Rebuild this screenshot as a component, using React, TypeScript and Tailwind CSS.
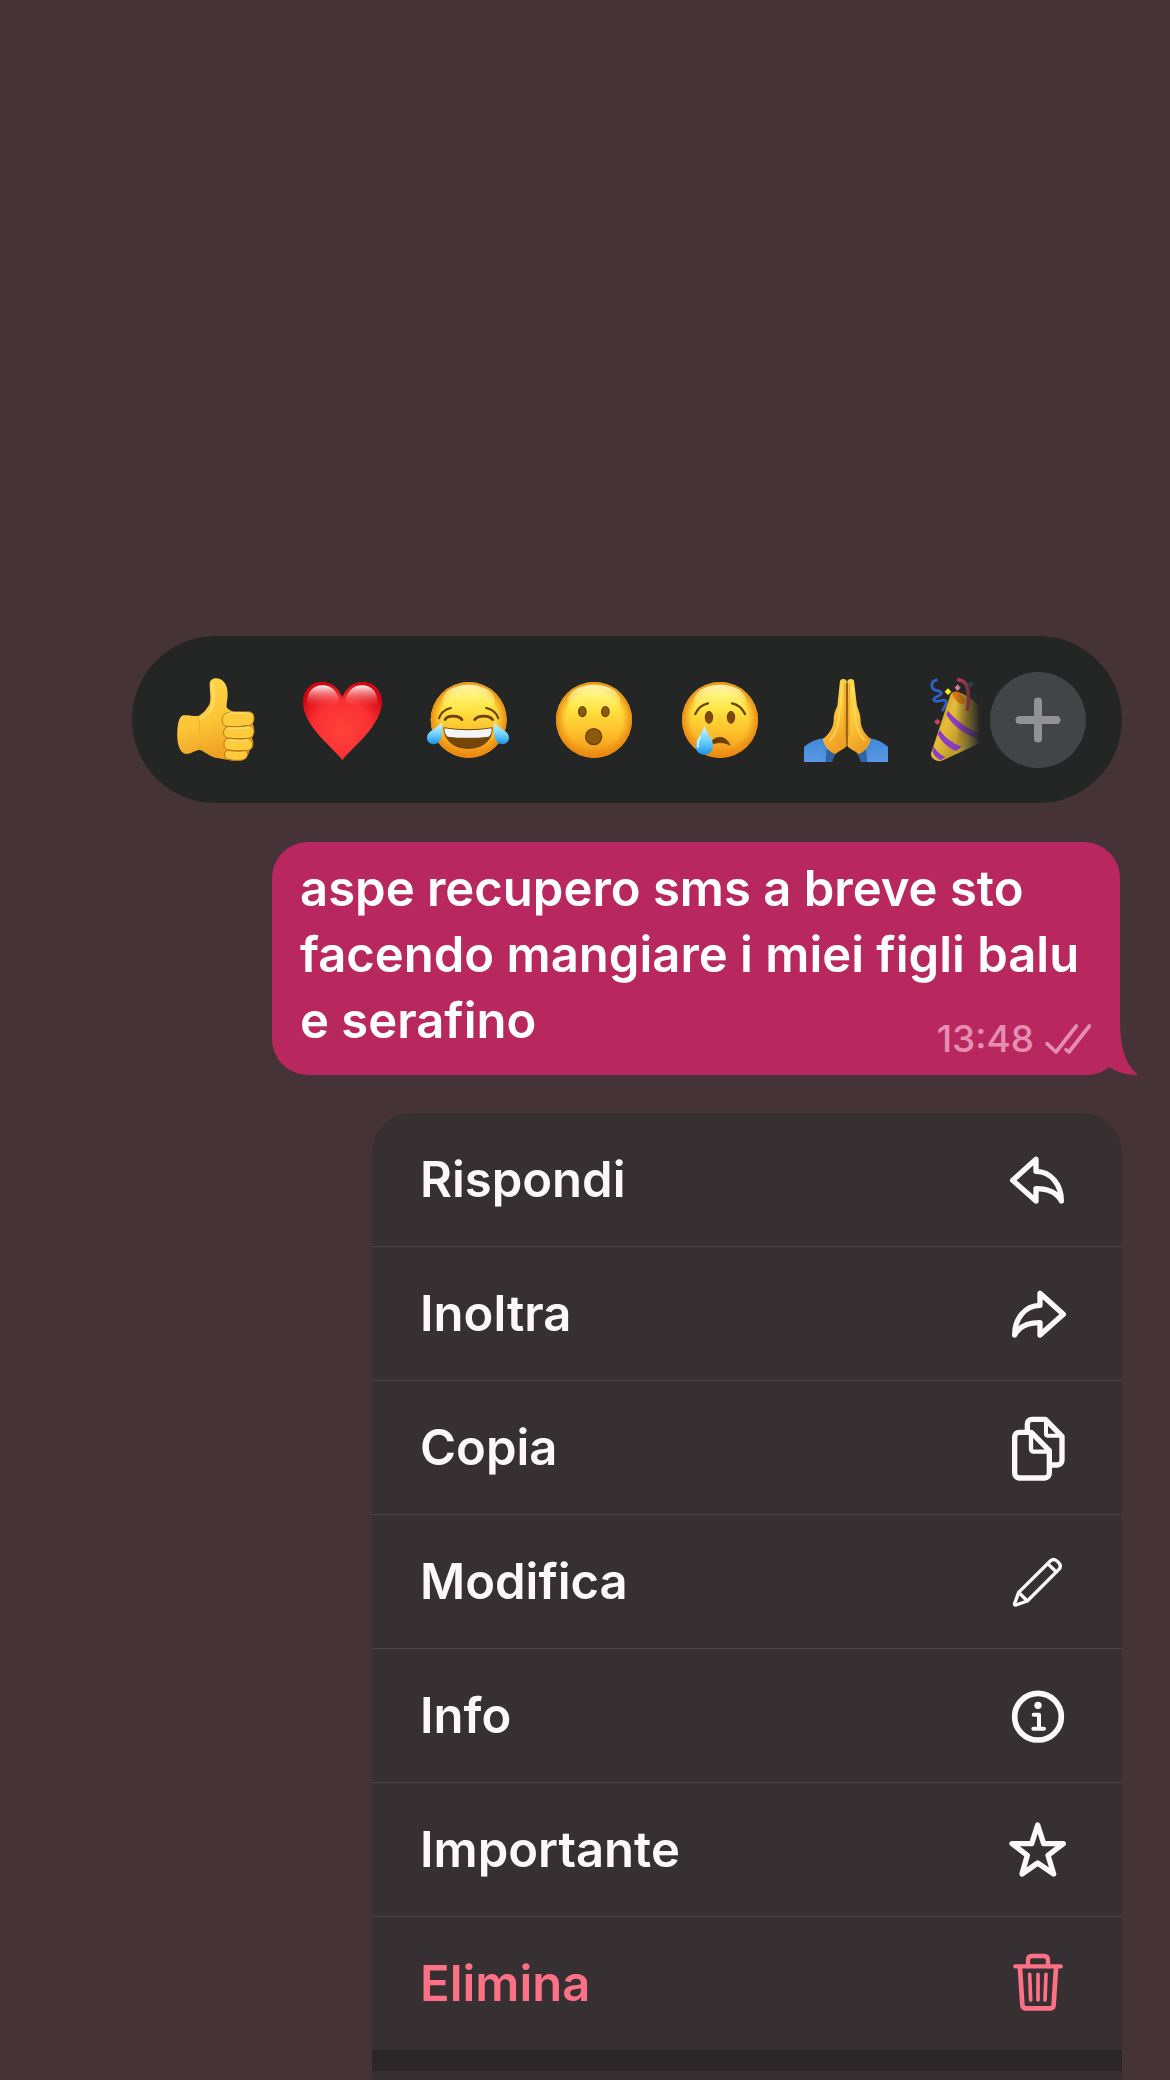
import type { ReactNode } from 'react'

const DARK = '#6b3f06'

function Gradients() {
  return (
    <svg className="absolute h-0 w-0" aria-hidden="true">
      <defs>
        <linearGradient id="face" x1="0" y1="0" x2="0" y2="1">
          <stop offset="0" stopColor="#fff04c" />
          <stop offset="0.35" stopColor="#fee23e" />
          <stop offset="0.72" stopColor="#fbb928" />
          <stop offset="1" stopColor="#f08c14" />
        </linearGradient>
        <radialGradient id="rim" cx="0.5" cy="0.5" r="0.5">
          <stop offset="0.74" stopColor="#ec8b12" stopOpacity="0" />
          <stop offset="1" stopColor="#e8860f" stopOpacity="0.95" />
        </radialGradient>
        <linearGradient id="shine" x1="0" y1="0" x2="0" y2="1">
          <stop offset="0" stopColor="#fffbc0" stopOpacity="0.9" />
          <stop offset="1" stopColor="#fff04c" stopOpacity="0" />
        </linearGradient>
        <linearGradient id="tear" x1="0" y1="0" x2="0" y2="1">
          <stop offset="0" stopColor="#d4f6ff" />
          <stop offset="0.55" stopColor="#6fd0fb" />
          <stop offset="1" stopColor="#1b94e4" />
        </linearGradient>
        <radialGradient id="heart" cx="0.5" cy="0.62" r="0.62">
          <stop offset="0" stopColor="#ff4238" />
          <stop offset="0.6" stopColor="#fa3034" />
          <stop offset="1" stopColor="#cf0712" />
        </radialGradient>
        <linearGradient id="heartShine" x1="0" y1="0" x2="0" y2="1">
          <stop offset="0" stopColor="#fff" stopOpacity="0.95" />
          <stop offset="1" stopColor="#ff5550" stopOpacity="0" />
        </linearGradient>
        <linearGradient id="skin" x1="0" y1="0" x2="0.3" y2="1">
          <stop offset="0" stopColor="#ffd94d" />
          <stop offset="0.6" stopColor="#fdc436" />
          <stop offset="1" stopColor="#eea024" />
        </linearGradient>
        <linearGradient id="sleeve" x1="0" y1="0" x2="0" y2="1">
          <stop offset="0" stopColor="#3f8ad9" />
          <stop offset="1" stopColor="#5a98e6" />
        </linearGradient>
        <linearGradient id="cuff" x1="0" y1="0" x2="1" y2="0">
          <stop offset="0" stopColor="#1c4a8c" stopOpacity="0" />
          <stop offset="0.5" stopColor="#173f7c" />
          <stop offset="1" stopColor="#1c4a8c" stopOpacity="0" />
        </linearGradient>
        <linearGradient id="cone" x1="0" y1="0.2" x2="1" y2="0.7">
          <stop offset="0" stopColor="#b68b1d" />
          <stop offset="0.3" stopColor="#e5bd3a" />
          <stop offset="0.55" stopColor="#c09a28" />
          <stop offset="1" stopColor="#f6e668" />
        </linearGradient>
      </defs>
    </svg>
  )
}

function Emoji({ viewBox, children }: { viewBox: string; children: ReactNode }) {
  return (
    <svg viewBox={viewBox} className="size-[84px] overflow-visible" aria-hidden="true">
      {children}
    </svg>
  )
}

function Face({ cx }: { cx: number }) {
  return (
    <>
      <circle cx={cx} cy="300" r="114" fill="url(#face)" />
      <circle cx={cx} cy="300" r="114" fill="url(#rim)" />
      <ellipse cx={cx} cy="242" rx="78" ry="48" fill="url(#shine)" />
    </>
  )
}

const ThumbsUp = () => (
  <Emoji viewBox="165 174 252 252">
    <path
      d="M272 190C274 172 300 170 313 184C326 197 327 216 325 236C324 248 321 258 324 264C332 271 340 275 350 276L392 275C407 277 409 300 400 312C408 322 407 345 398 354C406 364 405 384 391 392C388 407 382 418 366 421C345 425 310 416 288 413C268 408 254 391 240 390C226 392 216 402 200 402C182 400 173 370 175 335C176 304 183 287 194 286C210 285 224 289 237 288C252 283 262 268 270 256C278 240 272 212 272 190Z"
      fill="url(#skin)"
    />
    <path d="M238 288C244 300 240 316 242 340M240 390C246 382 243 374 242 366" fill="none" stroke="#e0a02a" strokeWidth="3" opacity="0.6" />
    <g fill="#fdcb3c" stroke="#b87512" strokeWidth="3">
      <path d="M324 278Q345 275 392 276C410 278 410 314 388 317Q350 322 322 319C304 314 305 285 324 278Z" />
      <path d="M326 320Q365 322 392 317C410 320 410 352 388 355Q355 358 325 354C309 349 310 325 326 320Z" />
      <path d="M326 355Q360 360 388 356C406 360 405 388 386 391Q352 395 326 390C311 385 311 360 326 355Z" />
      <path d="M326 391Q354 396 380 392C391 398 386 418 366 421Q345 423 325 417C313 412 314 396 326 391Z" />
    </g>
    <path d="M325 281C336 278 370 278 390 280M328 324C350 326 374 325 390 322M328 359C350 363 374 362 387 360" fill="none" stroke="#ffe478" strokeWidth="5" strokeLinecap="round" opacity="0.8" />
    <path d="M281 190C282 210 287 235 281 257C274 278 257 290 244 296" fill="none" stroke="#ffe777" strokeWidth="8" strokeLinecap="round" opacity="0.55" />
  </Emoji>
)

const Heart = () => (
  <Emoji viewBox="540 174 252 252">
    <path
      d="M667 421C650 397 605 360 578 322C558 294 549 268 549 246C549 210 573 185 606 185C636 185 657 205 667 232C677 205 698 185 728 185C761 185 786 210 786 246C786 268 776 294 756 322C729 360 684 397 667 421Z"
      fill="url(#heart)"
    />
    <path d="M561 250C560 216 580 196 607 196C636 196 652 214 658 242C640 262 580 266 561 250ZM676 242C682 214 698 196 727 196C754 196 774 216 773 250C754 266 694 262 676 242Z" fill="url(#heartShine)" />
  </Emoji>
)

const Joy = () => (
  <Emoji viewBox="918 174 252 252">
    <Face cx={1046} />
    <g fill="none" stroke={DARK} strokeLinecap="round">
      <path d="M957 295Q966 269 993 264M1135 295Q1126 269 1098 264" strokeWidth="6" />
      <path d="M975 299C982 285 1016 285 1026 299M1064 299C1074 285 1108 285 1118 299" strokeWidth="8" />
    </g>
    <path d="M970 322Q1045 334 1118 322C1119 360 1090 387 1045 387C1000 387 971 360 970 322Z" fill="#744608" />
    <path d="M973 325Q1045 337 1115 325C1116 338 1111 347 1106 350Q1045 357 983 350C977 345 973 337 973 325Z" fill="#f4f6f6" />
    <path d="M965 308C969 330 968 357 954 368C940 378 921 370 921 353C921 332 951 325 965 308ZM1123 308C1119 330 1121 357 1134 368C1148 378 1167 370 1167 353C1167 332 1137 325 1123 308Z" fill="url(#tear)" />
  </Emoji>
)

const Surprised = () => (
  <Emoji viewBox="156 174 252 252">
    <Face cx={282} />
    <g fill="#8d5a0b" stroke={DARK} strokeWidth="4">
      <ellipse cx="247" cy="275" rx="11" ry="15" />
      <ellipse cx="316" cy="275" rx="11" ry="15" />
      <ellipse cx="281" cy="350" rx="24" ry="24" />
    </g>
  </Emoji>
)

const Crying = () => (
  <Emoji viewBox="534 174 252 252">
    <Face cx={660} />
    <path d="M586 282Q598 255 624 250M696 250Q722 255 735 282" fill="none" stroke={DARK} strokeWidth="7" strokeLinecap="round" />
    <g fill="#7b4a08" stroke={DARK} strokeWidth="3">
      <ellipse cx="627" cy="292" rx="11" ry="18" />
      <ellipse cx="693" cy="292" rx="11" ry="18" />
    </g>
    <path d="M634 366C646 346 679 346 690 376C674 366 657 366 638 372Z" fill={DARK} stroke={DARK} strokeWidth="2" strokeLinejoin="round" />
    <path d="M613 314C617 339 640 352 639 378C638 395 627 404 613 404C598 404 587 394 587 378C588 352 609 340 613 314Z" fill="url(#tear)" />
    <path d="M600 352C594 362 592 371 594 381" fill="none" stroke="#e3faff" strokeWidth="5" strokeLinecap="round" />
  </Emoji>
)

const Pray = () => (
  <Emoji viewBox="72 174 252 252">
    <path d="M72 380Q100 358 131 355L168 400Q158 412 156 426H72ZM324 380Q296 358 270 355L230 400Q240 412 243 426H324Z" fill="url(#sleeve)" />
    <path d="M120 357L131 355L168 400Q158 412 156 426H118ZM278 357L270 355L230 400Q240 412 243 426H280Z" fill="url(#cuff)" opacity="0.25" />
    <path d="M140 388L168 400Q158 412 156 426H136ZM258 388L230 400Q240 412 243 426H262Z" fill="#173f7c" opacity="0.55" />
    <path d="M180 182C184 175 198 175 200 184L201 372C201 385 184 388 166 402C150 398 134 382 128 357C145 345 160 325 161 303C160 285 166 270 172 258Z" fill="url(#skin)" />
    <path d="M222 182C218 175 204 175 202 184L201 372C201 385 218 388 236 402C252 398 266 382 273 357C257 345 242 325 242 303C242 285 236 270 231 258Z" fill="url(#skin)" />
    <path d="M201 190V374" stroke="#7b4205" strokeWidth="4" />
    <path d="M187 190L181 260C173 290 184 324 149 362M215 190L222 260C230 290 220 324 254 362" fill="none" stroke="#ffe26a" strokeWidth="6" opacity="0.6" />
    <path d="M194 190L196 350M208 190L206 350" fill="none" stroke="#d98c1e" strokeWidth="4" opacity="0.6" />
  </Emoji>
)

const Party = () => (
  <Emoji viewBox="450 174 252 252">
    <path d="M473 179C450 183 450 209 472 212C490 216 487 222 470 230C452 242 464 247 486 241C506 238 500 252 486 273" fill="none" stroke="#315fd0" strokeWidth="8" />
    <path d="M512 222C520 209 552 214 600 258L640 350Q560 388 482 424C464 424 452 414 453 400Z" fill="url(#cone)" />
    <path d="M517 220C523 208 550 214 556 246C548 262 524 246 517 220Z" fill="#d3770d" />
    <path d="M503 272Q545 320 598 340L596 358Q530 335 499 284Z" fill="#8b3cc4" />
    <path d="M479 330Q505 367 545 380L527 393Q490 377 473 343Z" fill="#8b3cc4" />
    <path d="M461 379Q472 401 496 411L482 421Q462 410 457 393Z" fill="#8b3cc4" />
    <path d="M532 180C560 178 572 204 562 272" fill="none" stroke="#d33a5c" strokeWidth="11" />
    <path d="M504 205L514 215L504 225L494 215Z" fill="#f8ee28" />
    <path d="M533 193L542 203L533 213L524 203Z" fill="#ee7c9c" />
    <path d="M472 296L482 305L472 315L462 305Z" fill="#cf3e62" />
    <path d="M573 184L583 193L573 203L563 193Z" fill="#276d96" />
    <circle cx="587" cy="231" r="6" fill="#25466d" />
  </Emoji>
)

const REACTIONS = [
  { label: 'Mi piace', icon: <ThumbsUp /> },
  { label: 'Cuore', icon: <Heart /> },
  { label: 'Risata', icon: <Joy /> },
  { label: 'Stupore', icon: <Surprised /> },
  { label: 'Tristezza', icon: <Crying /> },
  { label: 'Grazie', icon: <Pray /> },
  { label: 'Festa', icon: <Party /> },
]

const MENU = [
  {
    label: 'Rispondi',
    icon: <path d="M14 91L84 28V64C131 64 160 107 160 153C146 126 118 116 84 116V153Z" strokeWidth="16" />,
  },
  {
    label: 'Inoltra',
    icon: <path d="M166 91L96 28V64C49 64 20 107 20 153C34 126 62 116 96 116V153Z" strokeWidth="16" />,
  },
  {
    label: 'Copia',
    icon: (
      <>
        <path d="M58 40V18a14 14 0 0 1 14-14H112L162 55V127a14 14 0 0 1-14 14H128" strokeWidth="16" />
        <path d="M114 6V47a6 6 0 0 0 6 6H160" strokeWidth="12" />
        <path d="M34 43H70L124 98V166a14 14 0 0 1-14 14H34a14 14 0 0 1-14-14V57a14 14 0 0 1 14-14Z" strokeWidth="16" />
        <path d="M69 45V93a8 8 0 0 0 8 8H122" strokeWidth="13" />
      </>
    ),
  },
  {
    label: 'Modifica',
    icon: (
      <path
        d="M20 154L32 121L127 27Q137 17 148 28L152 32Q162 43 152 53L58 147L24 159Q18 160 20 154ZM32 121L58 147M119 35L145 60"
        strokeWidth="10"
      />
    ),
  },
  {
    label: 'Info',
    icon: (
      <>
        <circle cx="90" cy="92" r="70" strokeWidth="17" />
        <circle cx="90" cy="58" r="11" fill="currentColor" stroke="none" />
        <path d="M77 86H93V128M76 128H108" strokeWidth="12" />
      </>
    ),
  },
  {
    label: 'Importante',
    icon: <path d="M89 15L107 71H166L120 106L137 162L89 129L42 162L58 106L12 71H71Z" strokeWidth="16" />,
  },
  {
    label: 'Elimina',
    danger: true,
    icon: (
      <>
        <path d="M22 37H158" strokeWidth="13" />
        <path d="M60 37V18Q60 6 72 6H108Q120 6 120 18V37" strokeWidth="13" />
        <path d="M36 42L43 152Q44 163 55 163H125Q136 163 137 152L144 42" strokeWidth="14" />
        <path d="M65 61L68 138M90 61V138M114 61L111 138" strokeWidth="11" />
      </>
    ),
  },
]

function ReactionBar() {
  return (
    <div className="flex h-[167px] w-full max-w-[990px] items-center rounded-full bg-[#242625] pr-9 pl-[42px]">
      <div className="flex min-w-0 flex-1 gap-[42px] overflow-hidden [mask-image:linear-gradient(to_right,black_calc(100%-24px),transparent)]">
        {REACTIONS.map((r) => (
          <button key={r.label} type="button" aria-label={r.label} className="shrink-0">
            {r.icon}
          </button>
        ))}
      </div>
      <button
        type="button"
        aria-label="Altre reazioni"
        className="ml-[10px] flex size-24 shrink-0 items-center justify-center rounded-full bg-[#424545] text-[#929292]"
      >
        <svg viewBox="0 0 48 48" className="size-12" fill="none" stroke="currentColor" strokeWidth="8" strokeLinecap="round" aria-hidden="true">
          <path d="M24 5.500V42.500M5.500 24H42.500" />
        </svg>
      </button>
    </div>
  )
}

function Message() {
  return (
    <div className="relative mr-[2px] w-full max-w-[848px] rounded-[36px] bg-[#b8285e] pt-[14px] pr-6 pb-[21px] pl-7 text-white">
      {/* tail */}
      <svg viewBox="0 0 162 180" className="absolute -right-[18px] bottom-0 h-[60px] w-[54px] text-[#b8285e]" aria-hidden="true">
        <path d="M0 180C30 180 54 174 75 155C95 170 125 180 162 180C128 148 111 112 108 30V0H0Z" fill="currentColor" />
      </svg>
      <p className="text-[49px] leading-[66px] font-semibold whitespace-nowrap">
        aspe recupero sms a breve sto
        <br />
        facendo mangiare i miei figli balu
        <br />e serafino
      </p>
      <div className="absolute right-[26px] bottom-[14px] flex items-center gap-[10px] text-[#e78db2]">
        <time className="text-[37px] leading-[44px] font-medium">13:48</time>
        <svg viewBox="882 576 150 96" className="h-8 w-[50px]" fill="none" stroke="currentColor" strokeWidth="11" strokeLinecap="round" strokeLinejoin="round" aria-label="Consegnato">
          <path d="M891 638L918 663L979 585M948 656L957 663L1018 585" />
        </svg>
      </div>
    </div>
  )
}

function ContextMenu() {
  return (
    <div className="flex w-full max-w-[750px] flex-1 flex-col overflow-hidden rounded-t-[40px] bg-[#373032]">
      <ul className="divide-y divide-[#4a4446]">
        {MENU.map((item) => (
          <li key={item.label}>
            <button
              type="button"
              className={`flex h-[133px] w-full items-center justify-between pr-[52px] pl-12 text-left text-[49px] leading-[66px] font-semibold ${
                item.danger ? 'text-[#fc7186]' : 'text-[#fcf8fa]'
              }`}
            >
              {item.label}
              <svg
                viewBox="-6 -6 192 192"
                className="size-16 overflow-visible"
                fill="none"
                stroke="currentColor"
                strokeLinecap="round"
                strokeLinejoin="round"
                aria-hidden="true"
              >
                {item.icon}
              </svg>
            </button>
          </li>
        ))}
      </ul>
      <div className="h-[21px] shrink-0 bg-[#2b2728]" />
      <div className="min-h-2 flex-1" />
    </div>
  )
}

export default function App() {
  return (
    <main className="flex min-h-screen flex-col items-end bg-[#463338] pt-[636px] pr-12 pl-12 font-['Inter','Liberation_Sans',sans-serif]">
      <Gradients />
      <ReactionBar />
      <div className="mt-[39px] mb-[38px] flex w-full justify-end">
        <Message />
      </div>
      <ContextMenu />
    </main>
  )
}
